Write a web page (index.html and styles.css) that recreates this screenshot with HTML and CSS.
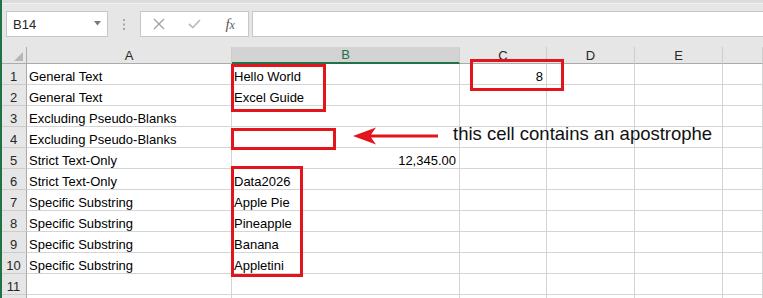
FILE: index.html
```html
<!DOCTYPE html>
<html>
<head>
<meta charset="utf-8">
<link rel="stylesheet" href="styles.css">
</head>
<body>
<div class="app">
  <div class="topedge"></div>
  <div class="fbar">
    <div class="namebox"><span>B14</span><svg class="dd" width="7" height="5" viewBox="0 0 7 5"><path d="M0 0H7L3.5 4.5Z" fill="#7a7a7a"/></svg></div>
    <div class="grip"><svg width="2" height="11" viewBox="0 0 2 11"><rect x="0" y="0" width="2" height="2" fill="#a6a6a6"/><rect x="0" y="4.5" width="2" height="2" fill="#a6a6a6"/><rect x="0" y="9" width="2" height="2" fill="#a6a6a6"/></svg></div>
    <div class="fbtns">
      <span class="fbtn"><svg width="12" height="12" viewBox="0 0 12 12"><path d="M1 1L11 11M11 1L1 11" stroke="#a3a3a3" stroke-width="1.4" fill="none"/></svg></span>
      <span class="fbtn"><svg width="13" height="10" viewBox="0 0 13 10"><path d="M1 5L4.8 8.6L12 1" stroke="#bdbdbd" stroke-width="1.8" fill="none"/></svg></span>
      <span class="fbtn fx"><i>f</i><i class="x">x</i></span>
    </div>
    <div class="finput"></div>
  </div>
  <div class="sheet">
    <div class="corner"><span class="tri"></span></div>
    <div class="ch">A</div><div class="ch sel">B</div><div class="ch">C</div><div class="ch">D</div><div class="ch">E</div><div class="ch"></div>

    <div class="rh">1</div><div class="c">General Text</div><div class="c">Hello World</div><div class="c r">8</div><div class="c"></div><div class="c"></div><div class="c"></div>
    <div class="rh">2</div><div class="c">General Text</div><div class="c">Excel Guide</div><div class="c"></div><div class="c"></div><div class="c"></div><div class="c"></div>
    <div class="rh">3</div><div class="c">Excluding Pseudo-Blanks</div><div class="c"></div><div class="c"></div><div class="c"></div><div class="c"></div><div class="c"></div>
    <div class="rh">4</div><div class="c">Excluding Pseudo-Blanks</div><div class="c"></div><div class="c"></div><div class="c"></div><div class="c"></div><div class="c"></div>
    <div class="rh">5</div><div class="c">Strict Text-Only</div><div class="c r">12,345.00</div><div class="c"></div><div class="c"></div><div class="c"></div><div class="c"></div>
    <div class="rh">6</div><div class="c">Strict Text-Only</div><div class="c">Data2026</div><div class="c"></div><div class="c"></div><div class="c"></div><div class="c"></div>
    <div class="rh">7</div><div class="c">Specific Substring</div><div class="c">Apple Pie</div><div class="c"></div><div class="c"></div><div class="c"></div><div class="c"></div>
    <div class="rh">8</div><div class="c">Specific Substring</div><div class="c">Pineapple</div><div class="c"></div><div class="c"></div><div class="c"></div><div class="c"></div>
    <div class="rh">9</div><div class="c">Specific Substring</div><div class="c">Banana</div><div class="c"></div><div class="c"></div><div class="c"></div><div class="c"></div>
    <div class="rh">10</div><div class="c">Specific Substring</div><div class="c">Appletini</div><div class="c"></div><div class="c"></div><div class="c"></div><div class="c"></div>
    <div class="rh">11</div><div class="c"></div><div class="c"></div><div class="c"></div><div class="c"></div><div class="c"></div><div class="c"></div>
    <div class="rh"></div><div class="c"></div><div class="c"></div><div class="c"></div><div class="c"></div><div class="c"></div><div class="c"></div>
  </div>

  <div class="hl hl-b12"></div>
  <div class="hl hl-b4"></div>
  <div class="hl hl-c1"></div>
  <div class="hl hl-b610"></div>
  <svg class="arrow" width="92" height="20" viewBox="0 0 92 20"><path d="M18 10H87" stroke="#e3141c" stroke-width="3"/><path d="M2 10L25 1.5L19 10L25 18.5Z" fill="#e3141c"/></svg>
  <div class="note">this cell contains an apostrophe</div>
</div>
</body>
</html>
```

FILE: styles.css
```css
html, body {
  margin: 0;
  padding: 0;
  overflow: hidden;
}
body {
  width: 763px;
  height: 298px;
  font-family: "Liberation Sans", Arial, sans-serif;
}
.app {
  position: relative;
  width: 761px;
  height: 298px;
  border-left: 2px solid #217346;
  background: #e6e6e6;
  overflow: hidden;
}
.topedge {
  height: 3px;
  background: #dcdcdc;
  border-bottom: 1px solid #f2f2f2;
}
.fbar {
  display: flex;
  height: 26px;
  margin-top: 7px;
  padding-left: 4px;
  margin-right: -6px;
}
.namebox {
  box-sizing: border-box;
  width: 102px;
  height: 26px;
  border: 1px solid #c6c6c6;
  background: #fff;
  display: flex;
  align-items: center;
  justify-content: space-between;
  padding: 0 6px 0 6px;
  font-size: 13px;
  color: #262626;
}
.namebox span {
  padding-top: 1px;
}
.dd {
  display: block;
  margin-top: -2px;
}
.grip {
  width: 32px;
  display: flex;
  align-items: center;
  justify-content: center;
}
.grip svg {
  display: block;
  margin-left: -1px;
}
.fbtns {
  box-sizing: border-box;
  width: 109px;
  height: 26px;
  border: 1px solid #c6c6c6;
  background: #fff;
  display: flex;
  align-items: center;
}
.fbtn {
  width: 36px;
  display: flex;
  justify-content: center;
  align-items: center;
}
.fbtn svg {
  display: block;
}
.fx {
  font-family: "Liberation Serif", "Times New Roman", serif;
  color: #595959;
  font-size: 15px;
  line-height: 15px;
}
.fx i {
  font-style: italic;
}
.fx .x {
  font-size: 12px;
  margin-left: 0px;
  position: relative;
  top: 1px;
}
.finput {
  flex: 1;
  margin-left: 3px;
  height: 26px;
  box-sizing: border-box;
  border: 1px solid #c6c6c6;
  background: #fff;
}
.sheet {
  margin-top: 10px;
  display: grid;
  grid-template-columns: 25px 205px 228px 87px 88px 88px 1fr;
  grid-template-rows: 17px repeat(12, 21px);
  font-size: 13px;
  line-height: 15px;
}
.corner, .ch, .rh, .c {
  box-sizing: border-box;
  display: flex;
  align-items: flex-end;
  white-space: nowrap;
  overflow: hidden;
}
.corner {
  background: #e6e6e6;
  border-right: 1px solid #ababab;
  border-bottom: 1px solid #ababab;
  position: relative;
}
.tri {
  position: absolute;
  right: 3px;
  bottom: 2px;
  width: 0;
  height: 0;
  border-left: 9px solid transparent;
  border-bottom: 9px solid #b7b7b7;
}
.ch {
  background: #e6e6e6;
  border-right: 1px solid #cdcdcd;
  border-bottom: 1px solid #ababab;
  justify-content: center;
  color: #262626;
}
.ch.sel {
  background: #d3d3d3;
  color: #217346;
  border-bottom: 2px solid #217346;
  line-height: 14px;
}
.rh {
  background: #e6e6e6;
  border-right: 1px solid #ababab;
  border-bottom: 1px solid #cdcdcd;
  justify-content: center;
  color: #262626;
  padding-right: 1px;
}
.c {
  background: #fff;
  border-right: 1px solid #d4d4d4;
  border-bottom: 1px solid #d4d4d4;
  padding: 0 3px 0 2px;
  color: #000;
}
.c.r {
  justify-content: flex-end;
}
.hl {
  position: absolute;
  box-sizing: border-box;
  border: 3px solid #e3141c;
}
.hl-b12 {
  left: 229px;
  top: 64px;
  width: 95px;
  height: 48px;
}
.hl-b4 {
  left: 229px;
  top: 128px;
  width: 105px;
  height: 22px;
}
.hl-c1 {
  left: 468px;
  top: 59px;
  width: 94px;
  height: 32px;
}
.hl-b610 {
  left: 229px;
  top: 166px;
  width: 72px;
  height: 111px;
}
.arrow {
  position: absolute;
  left: 349px;
  top: 126px;
  display: block;
}
.note {
  position: absolute;
  left: 451px;
  top: 124px;
  font-size: 18.5px;
  line-height: 20px;
  color: #111;
  white-space: nowrap;
}
```
